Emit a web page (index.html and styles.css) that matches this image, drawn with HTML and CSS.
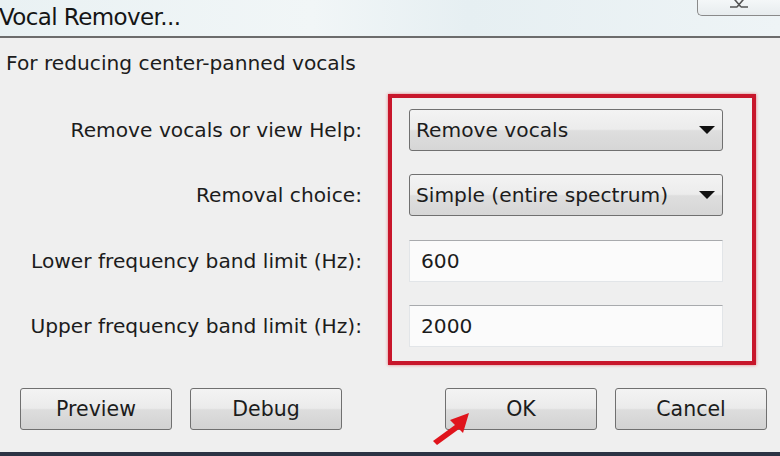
FILE: index.html
```html
<!DOCTYPE html>
<html>
<head>
<meta charset="utf-8">
<link rel="stylesheet" href="styles.css">
</head>
<body>
<div class="window">
  <div class="titlebar">
    <div class="title">Vocal Remover...</div>
    <div class="close">
      <svg width="24" height="10" viewBox="0 0 24 10"><path d="M3 -6 L14 7 M21 -6 L10 7 M10 7 L3 7 M14 7 L21 7" stroke="#555" stroke-width="1.6" fill="none"/></svg>
    </div>
  </div>
  <div class="content">
    <div class="desc">For reducing center-panned vocals</div>
    <div class="form">
      <div class="labels">
        <div class="label">Remove vocals or view Help:</div>
        <div class="label">Removal choice:</div>
        <div class="label">Lower frequency band limit (Hz):</div>
        <div class="label">Upper frequency band limit (Hz):</div>
      </div>
      <div class="box">
        <div class="select"><span>Remove vocals</span><span class="arrow"></span></div>
        <div class="select"><span>Simple (entire spectrum)</span><span class="arrow"></span></div>
        <div class="input">600</div>
        <div class="input">2000</div>
      </div>
    </div>
    <div class="buttons">
      <div class="group">
        <div class="btn">Preview</div>
        <div class="btn">Debug</div>
      </div>
      <div class="group">
        <div class="btn">OK</div>
        <div class="btn">Cancel</div>
      </div>
      <svg class="cursor" width="44" height="36" viewBox="0 0 44 36">
        <path d="M41 1 L22 8 L27 13 L5 29 L9 33 L31 17 L35 21 Z" fill="#e0141c"/>
      </svg>
    </div>
  </div>
  <div class="strip"></div>
</div>
</body>
</html>
```
FILE: styles.css
```css
html, body {
  margin: 0;
  padding: 0;
  background: #efefef;
}
body {
  width: 780px;
  height: 456px;
  overflow: hidden;
  font-family: "DejaVu Sans", "Liberation Sans", sans-serif;
  color: #1c1c1c;
}
.window {
  display: flex;
  flex-direction: column;
  height: 456px;
}
.titlebar {
  height: 36px;
  background: linear-gradient(90deg, #e9f1f3 0%, #f1f6f7 40%, #e6eff2 60%, #eef4f6 100%);
  border-bottom: 2px solid #6c6c6c;
  display: flex;
  justify-content: space-between;
  align-items: flex-start;
}
.title {
  font-size: 23px;
  margin-left: -1px;
  margin-top: 4px;
  letter-spacing: -0.6px;
  color: #151515;
}
.close {
  width: 82px;
  height: 15px;
  border: 1px solid #8a8a8a;
  border-top: none;
  border-right: none;
  border-radius: 0 0 0 5px;
  background: linear-gradient(#f4f7f8, #e7ecee);
  display: flex;
  justify-content: center;
  align-items: flex-start;
}
.content {
  flex: 1;
  display: flex;
  flex-direction: column;
}
.desc {
  font-size: 20.2px;
  margin: 13px 0 0 6px;
  height: 24px;
}
.form {
  display: flex;
  margin-top: 19px;
}
.labels {
  width: 362px;
  padding-top: 15px;
  padding-right: 26px;
  display: flex;
  flex-direction: column;
  gap: 23.3px;
}
.label {
  height: 42px;
  display: flex;
  align-items: center;
  justify-content: flex-end;
  font-size: 20.2px;
  white-space: nowrap;
}
.box {
  width: 314px;
  border: 4px solid #c8162b;
  box-shadow: 0 0 3px rgba(220, 40, 50, 0.6);
  padding: 11px 29px 14px 17px;
  display: flex;
  flex-direction: column;
  gap: 23.3px;
}
.select {
  height: 40px;
  border: 1px solid #707070;
  border-radius: 3px;
  background: linear-gradient(#f3f3f3 0%, #ececec 48%, #dedede 52%, #d6d6d6 100%);
  display: flex;
  align-items: center;
  justify-content: space-between;
  padding: 0 7px 0 6px;
  font-size: 20.2px;
  white-space: nowrap;
}
.arrow {
  width: 0;
  height: 0;
  border-left: 8px solid transparent;
  border-right: 8px solid transparent;
  border-top: 8px solid #111;
}
.input {
  height: 40px;
  background: #fbfbfb;
  border: 1px solid #e2e5e8;
  border-top-color: #a8aaad;
  display: flex;
  align-items: center;
  padding-left: 11px;
  font-size: 20.2px;
}
.buttons {
  position: relative;
  display: flex;
  justify-content: space-between;
  margin-top: 23px;
  padding: 0 13px 0 20px;
}
.group {
  display: flex;
  gap: 18px;
}
.btn {
  width: 150px;
  height: 40px;
  border: 1px solid #707070;
  border-radius: 3px;
  background: linear-gradient(#f3f3f3 0%, #ebebeb 48%, #dddddd 52%, #d2d2d2 100%);
  display: flex;
  align-items: center;
  justify-content: center;
  font-size: 20.5px;
}
.cursor {
  position: absolute;
  left: 428px;
  top: 24px;
}
.strip {
  height: 4px;
  background: #2c3344;
}
```
